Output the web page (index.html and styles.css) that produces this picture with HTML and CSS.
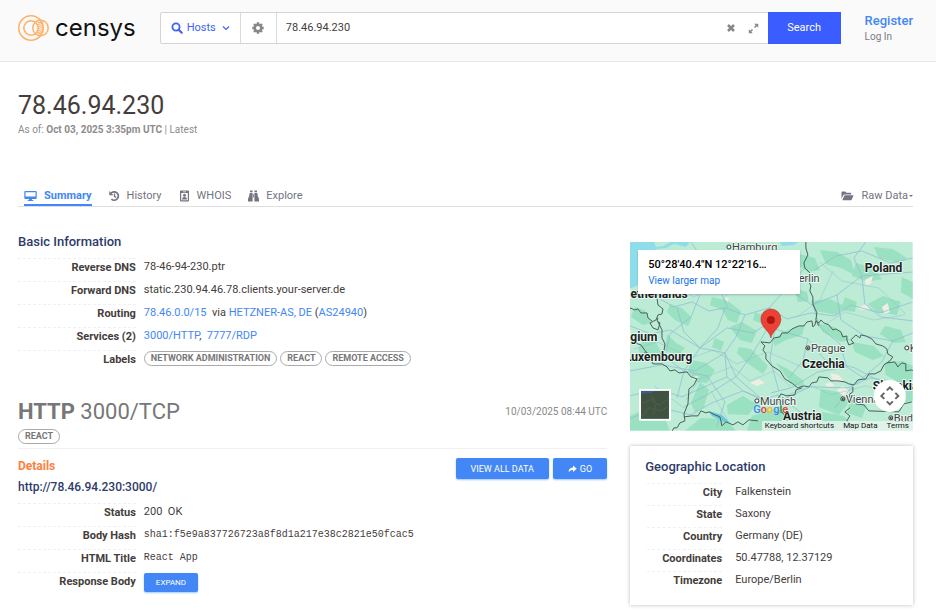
FILE: index.html
```html
<!DOCTYPE html>
<html lang="en">
<head>
<meta charset="utf-8">
<meta name="viewport" content="width=device-width, initial-scale=1">
<title>78.46.94.230 - Host Summary - Censys</title>
<link rel="stylesheet" href="styles.css">
</head>
<body>
<header class="topbar">
  <a class="logo" href="#">
    <svg class="logo-mark" viewBox="0 0 31 28" aria-hidden="true">
      <g fill="none" stroke="#ffb066" stroke-width="1.5">
        <circle cx="13" cy="14" r="12.2"/>
        <circle cx="13" cy="14" r="7.2"/>
        <circle cx="22.500" cy="14" r="7.700"/>
      </g>
      <path d="M20 8.500h5M19 10.500l6-1M19.500 12.500l6-1M19.500 14.500l6-1M19.500 16.500l6-1M19 18.500l6-1M19.500 20l4.500-1" stroke="#ffb066" fill="none"/>
    </svg>
    <span class="logo-text">censys</span>
  </a>
  <form class="search">
    <button type="button" class="search-type">
      <svg class="ic-search" viewBox="0 0 12 12" aria-hidden="true"><circle cx="5" cy="5" r="3.600" fill="none" stroke="currentColor" stroke-width="1.800"/><path d="M7.700 7.700l3 3" stroke="currentColor" stroke-width="2.200" stroke-linecap="round"/></svg>
      Hosts
      <svg class="ic-chevron" viewBox="0 0 8 8" aria-hidden="true"><path d="M1 2.500l3 3 3-3" fill="none" stroke="currentColor" stroke-width="1.200"/></svg>
    </button>
    <button type="button" class="search-settings" aria-label="Search settings">
      <svg class="ic-gear" viewBox="0 0 12 12" aria-hidden="true"><circle cx="6" cy="6" r="3.300" fill="none" stroke="currentColor" stroke-width="2.600"/><path d="M6 .3v2M6 9.700v2M.3 6h2M9.700 6h2M2 2l1.400 1.400M8.600 8.600L10 10M10 2L8.600 3.400M3.400 8.600L2 10" stroke="currentColor" stroke-width="2.400"/></svg>
    </button>
    <div class="search-field">
      <input type="text" value="78.46.94.230" aria-label="Search query">
      <button type="button" class="bare" aria-label="Clear"><svg class="ic-small" viewBox="0 0 10 10" aria-hidden="true"><path d="M2 2l6 6M8 2L2 8" stroke="currentColor" stroke-width="2.600"/></svg></button>
      <button type="button" class="bare" aria-label="Expand"><svg class="ic-expand" viewBox="0 0 11 11" aria-hidden="true"><path d="M6.500 4.500L9 2M4.500 6.500L2 9" stroke="currentColor" stroke-width="1.500"/><path d="M6.200.8h4v4zM.8 6.200v4h4z" fill="currentColor"/></svg></button>
    </div>
    <button type="submit" class="search-submit">Search</button>
  </form>
  <nav class="account">
    <a class="register" href="#">Register</a>
    <a class="login" href="#">Log In</a>
  </nav>
</header>

<main class="page">
  <h1>78.46.94.230</h1>
  <p class="asof">As of: <strong>Oct 03, 2025 3:35pm UTC</strong> | Latest</p>

  <nav class="tabs">
    <a class="tab active" href="#"><svg class="ic-wide" viewBox="0 0 13 12" aria-hidden="true"><path fill="currentColor" fill-rule="evenodd" d="M1.200 1h10.600q.9 0 .9.900v6.200q0 .9-.9.900H8v1h1.300v1H3.700v-1H5V9H1.200Q.3 9 .3 8.100V1.900Q.3 1 1.200 1zM1.500 2.200V6.500h10V2.200z"/></svg>Summary</a>
    <a class="tab" href="#"><svg class="ic-tab" viewBox="1 0 11 12" aria-hidden="true"><path d="M3 3.300A4.200 4.200 0 1 1 3.400 9.200" fill="none" stroke="currentColor" stroke-width="1.700"/><path d="M1.300 1v4.200h4.200z" fill="currentColor"/><path d="M6.500 3.600v2.700l1.700 1.200" fill="none" stroke="currentColor" stroke-width="1.300"/></svg>History</a>
    <a class="tab" href="#"><svg class="ic-tab" viewBox="1 0 11 12" aria-hidden="true"><path fill="currentColor" fill-rule="evenodd" d="M3 .5h7q1 0 1 1v9q0 1-1 1H3q-1 0-1-1v-9q0-1 1-1zM5 1.400v.8h3v-.8zM3.200 3v7.300h6.600V3z"/><circle cx="6.500" cy="5.200" r="1.500" fill="currentColor"/><path d="M4 9.500q0-2.500 2.500-2.500T9 9.500z" fill="currentColor"/></svg>WHOIS</a>
    <a class="tab" href="#"><svg class="ic-tab" viewBox="1 0 11 12" aria-hidden="true"><path fill="currentColor" d="M3 .6h2.500v1.700H3zM7.500.6H10v1.700H7.500zM2.700 3h2.900v8.400H1V9q1.500-3 1.700-6zM7.400 3h2.900q.2 3 1.700 6v2.400H7.400zM6.100 4h.8v3.500h-.8z"/></svg>Explore</a>
    <a class="tab raw" href="#"><svg class="ic-wide" viewBox="0 0 13 12" aria-hidden="true"><path fill="currentColor" d="M.5 8.500V2.300q0-.8.800-.8h2.900l1.200 1.200h4q.8 0 .8.800v1H3.500q-.7 0-1 .6zM1.300 10.300l2-4.600q.2-.5.700-.5h8.500L10.700 9.700q-.2.600-.8.600z"/></svg>Raw Data<span class="caret"></span></a>
  </nav>

  <div class="columns">
    <div class="primary">
      <section>
        <h2>Basic Information</h2>
        <dl class="facts">
          <dt>Reverse DNS</dt><dd>78-46-94-230.ptr</dd>
          <dt>Forward DNS</dt><dd>static.230.94.46.78.clients.your-server.de</dd>
          <dt>Routing</dt><dd><a href="#">78.46.0.0/15</a>&nbsp; via <a href="#">HETZNER-AS, DE</a> (<a href="#">AS24940</a>)</dd>
          <dt>Services (2)</dt><dd><a href="#">3000/HTTP</a>,&nbsp; <a href="#">7777/RDP</a></dd>
          <dt>Labels</dt><dd class="pills"><span class="pill">NETWORK ADMINISTRATION</span><span class="pill">REACT</span><span class="pill">REMOTE ACCESS</span></dd>
        </dl>
      </section>

      <section class="service">
        <div class="service-head">
          <h2 class="service-title"><strong>HTTP</strong> 3000/TCP</h2>
          <span class="stamp">10/03/2025 08:44 UTC</span>
        </div>
        <div class="pills service-tags"><span class="pill">REACT</span></div>
        <div class="details-head">
          <div>
            <h3>Details</h3>
            <a class="url" href="#">http://78.46.94.230:3000/</a>
          </div>
          <div class="actions">
            <button type="button" class="btn">VIEW ALL DATA</button>
            <button type="button" class="btn"><svg class="ic-go" viewBox="0 0 9 8" aria-hidden="true"><path fill="currentColor" d="M5 .5L8.800 3.700 5 6.900V5Q2 4.900.8 7.300.2 2.700 5 2.400z"/></svg>GO</button>
          </div>
        </div>
        <dl class="facts">
          <dt>Status</dt><dd>200&nbsp; OK</dd>
          <dt>Body Hash</dt><dd class="mono">sha1:f5e9a837726723a8f8d1a217e38c2821e50fcac5</dd>
          <dt>HTML Title</dt><dd class="mono">React App</dd>
          <dt>Response Body</dt><dd><button type="button" class="btn btn-expand">EXPAND</button></dd>
        </dl>
      </section>
    </div>

    <aside class="secondary">
      <div class="map">
        <svg class="map-art" viewBox="0 0 283 189" preserveAspectRatio="xMidYMid slice" role="img" aria-label="Map of Central Europe">
          <defs><clipPath id="land"><rect width="283" height="189"/></clipPath></defs>
          <g clip-path="url(#land)">
            <rect width="283" height="189" fill="#bcebd6"/>
            <path fill="#8fdcea" d="M0 0h60l-4 5-12-3-8 4-10 1-7 10-5 14-6 12-8 4z"/>
            <path fill="#bcebd6" d="M24 0h16l-6 4-8 1z"/>
            <path fill="#8fdcea" d="M150 0h18l-4 3-12 1z"/>
            <g fill="#90dfba" fill-opacity=".8">
              <path d="M40 62l12 4 10 10-4 8-13-6-8-8zM82 55l16 4 13 10-4 12-9-3-6-10-12-5zM14 98l12 2 5 10-6 9-12-3-5-9zM37 92l9 9 9 5-8 8-12-6zM62 118l14 3 9 7-8 13-12-1-7-12z"/>
              <path d="M70 140l9 8-5 17-9 5-4-9zM100 85l12-5 15 9-5 12-12-3zM109 105l12 2 17 17-5 8-17-12-9-9zM85 96l9 4-3 9-9-4zM125 70l12 5-4 7-10-4zM143 97l15-9 17-5-3 10-16 5-11 6zM165 11l20 5 5 12-12 2-12-8zM190 8l17 2 14 8 4 15-14-7-15-4zM226 21l18 5 8 11-14 3-16-6zM244 5l19 2 14 9-8 5-20-5zM181 59l19-2 15 7-8 9-21-4zM215 55l12 5-2 10-14-2zM238 62l15-8 18 6-4 13-20-3zM188 81l16 4 16 13-9 2-18-10zM222 100l22 4 10 10-11 4-18-8zM254 121l19-2 10 5v14l-13 3-14-8zM158 127l16 12-1 7-12-5-15-20zM97 163l16-9 14 8-9 11-20-1zM122 174l24-7 20 6 16 11-4 5h-61zM191 147l17 3 12 9-11 14-20-8zM220 156l17 7-5 13-14-5zM243 145l18-5 22 4v15l-26 3zM0 174l15-7 18 5 7 17H0zM71 176l24 1 11 12H55zM192 170l22 4 14 15h-40zM5 65l9 3 8 13-9 2-12-8zM56 36l19 3 7 9-9 4-18-6zM108 13l14 3-3 12-15-2zM255 84l16 4 5 12-12 1-14-9zM165 46l12 4 2 9-11 1zM272 35l11 5v17l-12-7z"/>
            </g>
            <g fill="#efeee5"><path d="M227 66l9-4 4 5-8 1zM235 38l8-4-2 8-5 1zM252 65l6-4 2 9-5 2zM61 135l8-1-5 5zM120 141l9-4 6 4-8 3zM200 131l9 2 5 6-10 1zM207 148l6-4 7 5-5 6zM195 142l6-2 4 4-7 1zM94 55l5 1-1 4z"/></g>
            <path fill="#68c9dd" d="M79 169l13 4 8 8-6-1-12-6zM148 153l2 8-2 1z"/>
            <g fill="none" stroke="#8fbcd3" stroke-width="1" stroke-opacity=".75" stroke-linejoin="round">
              <path d="M30 57l14 8 18-5 17 9 16-3 20 7 24-7 18 11 24-6 24 3 16-11 29 8 33-11M47 66l7 24 16 16 25 5 11 24 27 23 32 4M70 53l-9 22-21 17-5 23 19 14 23 5 18 26-8 24M95 66l-7 20-18 20-16 23-7 27M115 73l-9 22-11 16 2 24 16 14 20 9 15-5 26 20M139 66l-3 23-14 24-16 22-29 18-23 12M175 26l-18 20-18 20 6 21 33 10 17 21 30 8 32 17M157 46l25 17 25-10 25-19 51-4M183 63l7 22 20 17 7 23 18 12M207 53l4 25 24 16 28 5 20-8M232 34l-8-18 12-16M232 34l3 28 16 13 32 4M178 97l-5 22-14 17M217 125l-29 5-27 16-20 5M0 84l21 8 19-4 30 18 27-20 26 5 22-14M0 129l32-6 33 6 30-18M0 154l27-7 25 8 45-20M0 177l27-12 34 8 21-12 31-12 31 13 36-17 38 1 22-10 43 6M145 87l-5 30 9 32M263 99l-11 21-29 24-18 22M185 28l21-14 26-5 29 12 22-5M52 34l30-3 24-18 21 13 30-12M61 0l21 31 16 35"/>
              <path stroke-opacity=".45" d="M12 50l31-10 21 15 22-13 30 9 25-14 29 17M4 107l23-7 35 16 21-8 24 14 31-12 34 15M56 158l14-21 32-12 18 14 24-10 17 16M190 20l22 19 37 7 27 26M196 82l19-12 29 8 31-5M155 154l27-10 19 9 35-9 36 11M24 144l30 22M81 149l17 30M93 57l28-30 24 7M203 29l-13 29-23 17"/>
            </g>
            <g class="borders">
              <path d="M27 56l1 7 5 4-1 5-4 1-2 5-6 3 3 5 5 2 2-7-3-2 1-3M0 66l5 2 3-1 3 4 6 0 1 5 4 3M28 80l4 8 0 8 3 6-1 7-6 5-7 0-5-4-5-7-6-2-4-4M15 110l0 5 5 1 3 6 9 0 5 3 3 4 5-1 4 3 8-1 4 5 6 2-3 6-5 4-1 15-4 10 1 7-5 2-3 5-3 0-4 7M54 175l8-1 6 0 3-5 5 2 3-1M79 170l6 3 5 2 2 9 4-4 7 3 5-3 5 3 6-5 9 1"/>
              <path d="M176 0l0 6 2 7-4 8 1 5 5 5-2 6 3 7-1 5 3 6 0 7 4 9-1 7 3 6"/>
              <path d="M140 101l4-5 6-1 2-4 6 0 4-4 7-3 5 0 3-4 5-1 1 6 2-2 1-4 3 2 2-3 3 3 5 2 4 5 3-1 5 3 2 5 4-1 0 4 2 5 5-2-3-3 5-5 4 3 1-3 5 1 6 3 4 5 7 2 4 3 1 5 5 3-3 4-6 4-3 6-6 3-6 0-3 5-8 1-4 5-5-1-4-2-7-1-7 0-3-3-9-1-2 5-5 1-3 4-5-1-6 2-5-4-8-5-5-8-8-5-6-7 0-5-3-4 2-4-4-4z"/>
              <path d="M257 121l8-1 3 5 4-4 4 1 0 7 6-1 3 2M223 145l0 5-3 2-1 7 4 0 3 3 8 1 5 6 30 1 5-8 8-2M220 166l-5 4 5 4-3 5 5 4 8-1M172 146l-6 2-1 5-8 1-6-2-3 5 3 6 0 6 4 5"/>
            </g>
            <g class="city-dots"><circle cx="99" cy="5" r="2"/><circle cx="178" cy="106" r="2"/><circle cx="127" cy="159" r="2"/><circle cx="213" cy="157" r="2"/><circle cx="261" cy="176" r="2"/><circle cx="277" cy="106" r="2"/></g>
            <g fill="#333"><circle cx="178" cy="106" r="1"/><circle cx="213" cy="157" r="1"/><circle cx="261" cy="176" r="1"/></g>
            <g class="city"><text x="102" y="9">Hamburg</text><text x="162" y="40">Berlin</text><text x="181" y="110">Prague</text><text x="130" y="163">Munich</text><text x="216" y="161">Vienna</text><text x="264" y="180">Budapest</text><text x="280" y="110">Kraków</text></g>
            <g class="country"><text x="-8" y="56">Netherlands</text><text x="-17" y="99">Belgium</text><text x="-5" y="119">Luxembourg</text><text x="235" y="30">Poland</text><text x="172" y="126">Czechia</text><text x="153" y="178">Austria</text><text x="243" y="148">Slovakia</text></g>
            <path d="M141 96c-1-7-10-10-10-19a10 10 0 0 1 20 0c0 9-9 12-10 19z" fill="#ea4335" stroke="#bd352b" stroke-width=".6"/>
            <circle cx="141" cy="78" r="4" fill="#b31412"/>
            <rect x="9" y="147" width="32" height="32" rx="1" fill="#fff"/>
            <rect x="11" y="149" width="28" height="28" fill="#405343"/>
            <path d="M11 149h14l-4 2-10 1z" fill="#435989"/>
            <path d="M11 162l10-4 8 5 10-6M12 174l7-8 12 3 8-5M21 153l5 9-3 11" stroke="#4b5a42" fill="none" stroke-width="1.500"/>
            <circle cx="260" cy="154" r="16" fill="#fff"/>
            <path d="M257 148.500l3-3 3 3M257 159.500l3 3 3-3M254.500 151l-3 3 3 3M265.500 151l3 3-3 3" fill="none" stroke="#666" stroke-width="2"/>
          </g>
        </svg>
        <div class="map-card"><strong>50°28'40.4"N 12°22'16…</strong><a href="#">View larger map</a></div>
        <span class="map-brand"><i class="b">G</i><i class="r">o</i><i class="y">o</i><i class="b">g</i><i class="g">l</i><i class="r">e</i></span>
        <div class="map-foot"><button type="button">Keyboard shortcuts</button><span>Map Data</span><a href="#">Terms</a></div>
      </div>

      <section class="card">
        <h2>Geographic Location</h2>
        <dl class="facts geo">
          <dt>City</dt><dd>Falkenstein</dd>
          <dt>State</dt><dd>Saxony</dd>
          <dt>Country</dt><dd>Germany (DE)</dd>
          <dt>Coordinates</dt><dd>50.47788, 12.37129</dd>
          <dt>Timezone</dt><dd>Europe/Berlin</dd>
        </dl>
      </section>
    </aside>
  </div>
</main>
</body>
</html>
```
FILE: styles.css
```css
* { box-sizing: border-box; }

body {
  margin: 0;
  background: #fff;
  color: #443d3b;
  font: 11px/16px Roboto, "Liberation Sans", sans-serif;
}

h1, h2, h3, p, dl, dd { margin: 0; }
a { color: #4287f5; text-decoration: none; }
button, input { font: inherit; color: inherit; }
button { cursor: pointer; }
svg { display: block; flex: none; }

/* Top bar */
.topbar {
  display: flex;
  align-items: center;
  padding: 11px 23px 16px 18px;
  background: #fafafa;
  border-bottom: 1px solid #e6e6e6;
}
.logo { display: flex; align-items: center; gap: 6px; margin-right: 24px; color: #111; }
.logo-mark { width: 31px; height: 28px; }
.logo-text { font: 24px/28px Inter, Roboto, sans-serif; }

.search {
  display: flex;
  flex: 1;
  height: 32px;
  background: #fff;
  border: 1px solid #d4d4d4;
  border-radius: 2px;
}
.search button { border: 0; background: none; padding: 0; }
.search .search-type {
  display: flex;
  align-items: center;
  gap: 4px;
  padding: 0 10px;
  color: #4063f5;
}
.search .search-settings {
  display: grid;
  place-items: center;
  width: 37px;
  color: #888;
  border: solid #dadada;
  border-width: 0 1px;
}
.ic-search, .ic-gear { width: 12px; height: 12px; }
.ic-chevron { width: 8px; height: 8px; margin-left: 2px; }
.search-field { display: flex; flex: 1; align-items: center; gap: 12px; padding: 0 10px 0 9px; }
.search-field input { flex: 1; min-width: 0; border: 0; padding: 0; outline: 0; background: none; }
.search .bare { color: #888; }
.ic-small { width: 10px; height: 10px; }
.ic-expand { width: 11px; height: 11px; }
.search .search-submit { width: 73px; margin: -1px; background: #3b5cff; color: #fff; }

.account { display: flex; flex-direction: column; margin-left: 24px; padding-top: 2px; }
.register { font-size: 13px; font-weight: 500; }
.login { color: #7a7a86; font-size: 10px; }

/* Page heading and tabs */
.page { padding: 27px 23px 6px 18px; }
h1 { font-size: 25px; line-height: 33px; font-weight: 400; }
.asof { color: #8c8c8c; font-size: 10px; }

.tabs {
  display: flex;
  gap: 17px;
  margin-top: 50px;
  padding-left: 6px;
  border-bottom: 1px solid #dedede;
}
.tab {
  display: flex;
  align-items: center;
  gap: 7px;
  border-bottom: 2px solid transparent;
  color: #737382;
}
.tab.active { color: #4287f5; border-color: #4287f5; font-weight: 700; }
.tab.raw { margin-left: auto; }
.ic-tab { width: 11px; height: 12px; }
.ic-wide { width: 13px; height: 12px; }
.caret { margin-left: -6px; border: 2px solid transparent; border-top-color: currentColor; border-bottom: 0; }

/* Columns */
.columns {
  display: grid;
  grid-template-columns: minmax(0, 25fr) minmax(0, 12fr);
  gap: 23px;
  align-items: start;
  padding-top: 27px;
}
.secondary { padding-top: 8px; }
h2, h3 { font-size: 13px; line-height: 16px; font-weight: 500; color: #2e3b6b; }

.facts { display: grid; grid-template-columns: 20% minmax(0, 1fr); column-gap: 8px; margin-top: 8px; }
.facts dt, .facts dd { height: 23px; line-height: 16px; padding-top: 1px; }
.facts dt { border-top: 1px dashed #f0f0f0; text-align: right; font-weight: 700; }
.facts dd { white-space: nowrap; }
.facts .mono { font-family: "Liberation Mono", monospace; font-size: 10px; }

.pills { display: flex; align-items: flex-start; gap: 3px; }
.pill {
  height: 15px;
  padding: 0 6px;
  border: 1px solid #aaa;
  border-radius: 8px;
  color: #777;
  font-size: 9px;
  line-height: 13px;
  font-weight: 700;
}

.service { margin-top: 25px; }
.service-head { display: flex; align-items: center; justify-content: space-between; }
.service-title { color: #777; font-size: 22px; line-height: 28px; font-weight: 400; }
.stamp { color: #888; font-size: 10px; }
.service-tags { padding: 3px 0 4px; border-bottom: 1px solid #f0f0f0; }
.details-head { display: flex; justify-content: space-between; padding-top: 9px; }
h3 { color: #ff7e40; font-size: 12px; font-weight: 700; }
.url { display: block; margin-top: 5px; color: #2e3b6b; font-size: 12px; font-weight: 500; }
.actions { display: flex; align-items: flex-start; gap: 4px; }

.btn {
  display: flex;
  align-items: center;
  gap: 3px;
  height: 21px;
  padding: 0 15px;
  border: 0;
  border-radius: 2px;
  background: #4287f5;
  box-shadow: 0 1px 2px #9cc8ff;
  color: #fff;
  font-size: 9px;
}
.btn-expand { height: 19px; padding: 0 12px; font-size: 8px; }
.ic-go { width: 9px; height: 8px; }

/* Map */
.map { position: relative; overflow: hidden; }
.map-art { width: 100%; height: auto; }
.borders { fill: none; stroke: #47605a; stroke-width: 1; stroke-linejoin: round; }
.city-dots { fill: #fff; stroke: #333; stroke-width: 1; }
.city, .country { paint-order: stroke; stroke: #e6f8ef; stroke-width: 2px; stroke-linejoin: round; fill: #444; }
.city { font-size: 11px; }
.country { font-size: 12px; font-weight: 700; fill: #1d1d1d; }
.map-card {
  position: absolute;
  top: 8px;
  left: 8px;
  width: 162px;
  padding: 7px 10px 6px;
  background: #fff;
  box-shadow: 0 1px 2px #0003;
  white-space: nowrap;
}
.map-card strong { display: block; color: #000; font-weight: 500; }
.map-card a { display: block; font-size: 10px; line-height: 15px; color: #1a73e8; }
.map-brand { position: absolute; left: 123px; bottom: 13px; font-weight: 500; }
.map-brand i { font-style: normal; }
.b { color: #4285f4; }
.r { color: #ea4335; }
.y { color: #fbbc04; }
.g { color: #34a853; }
.map-foot {
  position: absolute;
  right: 0;
  bottom: 0;
  display: flex;
  gap: 9px;
  padding: 0 4px 0 3px;
  background: #e8f5eecc;
  color: #111;
  font-size: 8px;
  line-height: 10px;
}
.map-foot button { padding: 0; border: 0; background: none; }
.map-foot a { color: inherit; }

/* Location card */
.card { margin-top: 15px; padding: 13px 15px 12px; box-shadow: 0 0 4px #0004; }
.geo { grid-template-columns: 75px minmax(0, 1fr); column-gap: 13px; margin: 8px 0 0 2px; }
.geo dt, .geo dd { height: 22px; }
```
